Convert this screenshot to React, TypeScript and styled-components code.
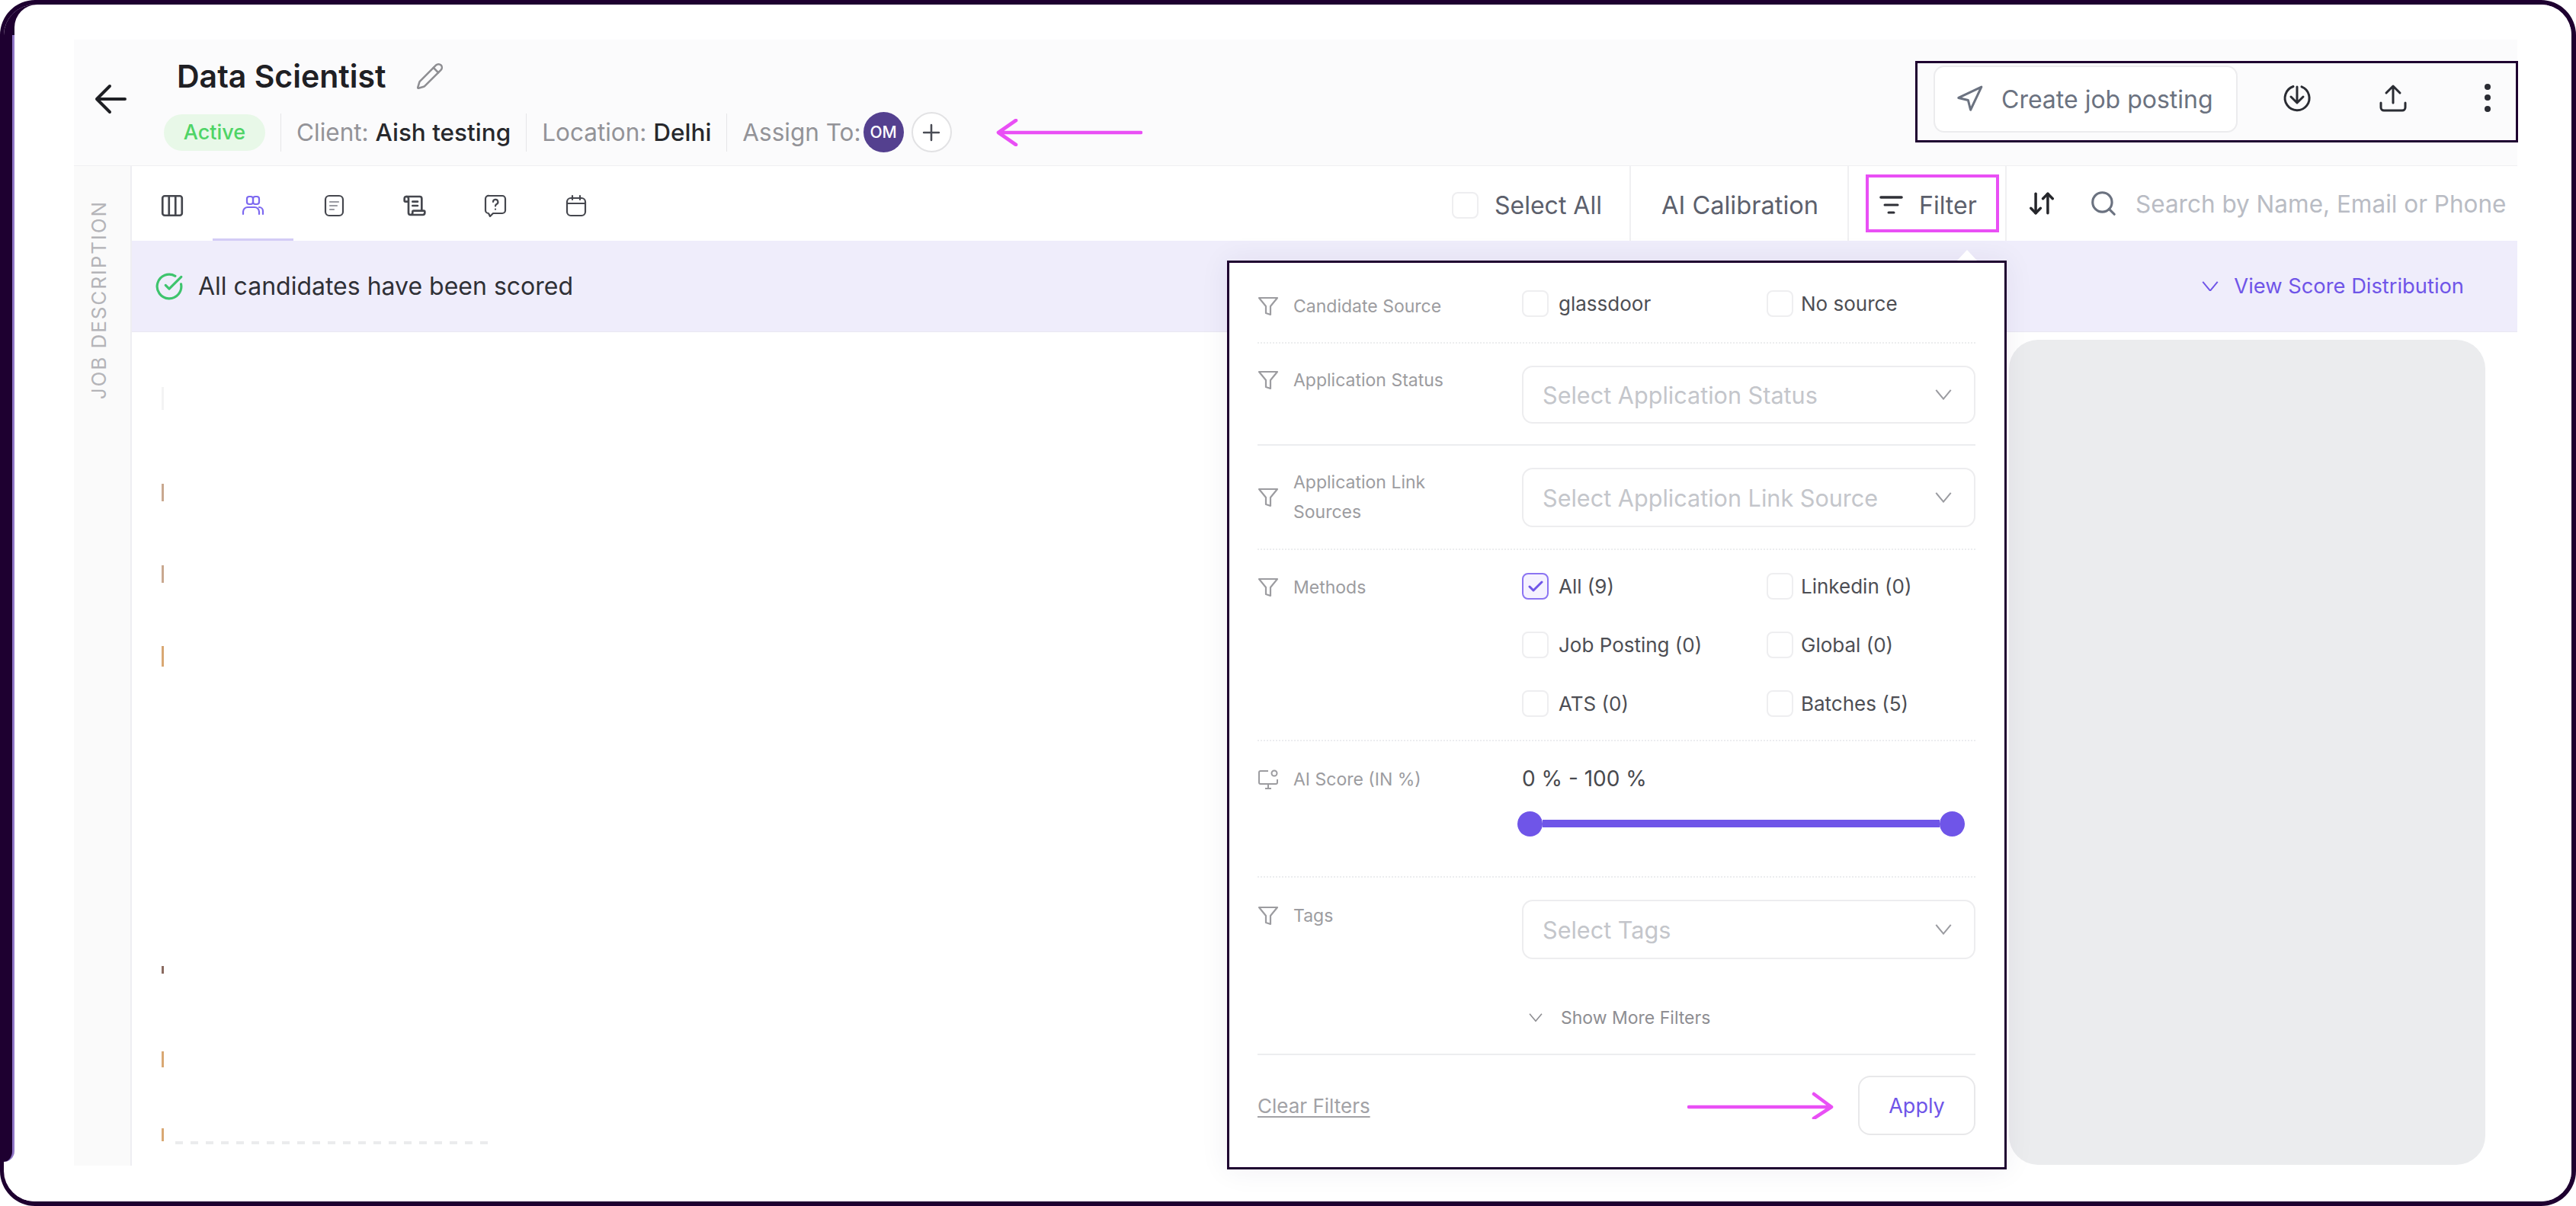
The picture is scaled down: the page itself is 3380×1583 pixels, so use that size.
import React from "react";
import styled, { createGlobalStyle } from "styled-components";
import { ArrowDownUp, Check, CircleCheckBig, Columns3, Navigation, Pencil, Plus, ScrollText, Search } from "lucide-react";

const dark = "#1e0030";
const magenta = "#e94ff5";
const purple = "#6f55e8";

const Global = createGlobalStyle`
  html, body {
    margin: 0;
    background: #fff;
    overflow: hidden;
  }
  * {
    box-sizing: border-box;
  }
  body {
    font-family: Inter, "Liberation Sans", sans-serif;
  }
`;

const Frame = styled.div`
  position: relative;
  display: flex;
  width: 3380px;
  height: 1583px;
  overflow: hidden;
  background: #fff;
  border: solid ${dark};
  border-width: 6px 6px 6px 5px;
  border-radius: 46px;

  &::before {
    content: "";
    position: absolute;
    left: 10px;
    top: 0;
    width: 40px;
    height: 40px;
    background: ${dark};
  }
`;

const Strip = styled.div`
  flex-shrink: 0;
  width: 14px;
  height: 1519px;
  background: ${dark};
  border-right: 3px solid #9077c7;
  border-bottom-right-radius: 20px;
`;

const Main = styled.div`
  position: relative;
  flex: 1;
  min-width: 0;
  padding: 46px 71px 0 78px;
  background: #fff;
  border-top-left-radius: 30px;
`;

const Panel = styled.div`
  display: flex;
  flex-direction: column;
  height: 1478px;
`;

const Header = styled.header`
  display: flex;
  justify-content: space-between;
  flex-shrink: 0;
  height: 166px;
  padding-left: 27px;
  background: #fbfbfc;
  border-bottom: 1px solid #f0f0f2;
`;

const HeaderLeft = styled.div`
  display: flex;
  align-items: flex-start;
`;

const BackIcon = styled.svg`
  width: 42px;
  height: 40px;
  margin-top: 58px;
  margin-right: 49px;
`;

const TitleColumn = styled.div`
  display: flex;
  flex-direction: column;
  padding-top: 23px;
`;

const TitleRow = styled.div`
  display: flex;
  align-items: center;
  gap: 38px;
  height: 50px;
  padding-left: 17px;
  color: #8e8e92;
`;

const Title = styled.h1`
  margin: 0;
  font-size: 41px;
  font-weight: 600;
  color: #1f2024;
  white-space: nowrap;
`;

const StatusRow = styled.div`
  display: flex;
  align-items: center;
  gap: 20px;
  height: 53px;
  margin-top: 22px;
`;

const Pill = styled.span`
  display: flex;
  align-items: center;
  justify-content: center;
  width: 133px;
  height: 48px;
  border-radius: 24px;
  background: #e8f8e8;
  color: #4fd466;
  font-size: 27px;
  font-weight: 500;
`;

const Divider = styled.span`
  width: 1px;
  height: 50px;
  background: #e6e6e8;
`;

const Meta = styled.span`
  color: #939398;
  font-size: 31.5px;
  white-space: nowrap;

  b {
    color: #27282c;
    font-weight: 500;
  }
`;

const AssignGroup = styled.div`
  display: flex;
  align-items: center;
`;

const Avatar = styled.span`
  display: flex;
  align-items: center;
  justify-content: center;
  width: 53px;
  height: 53px;
  margin-left: 3px;
  border-radius: 50%;
  background: #54408f;
  color: #fff;
  font-size: 21px;
  font-weight: 500;
`;

const AddButton = styled.span`
  display: flex;
  align-items: center;
  justify-content: center;
  width: 53px;
  height: 53px;
  margin-left: 10px;
  border-radius: 50%;
  border: 2px solid #e2e2e4;
  background: #fff;
  color: #4a4c55;
`;

const LongArrow = styled.svg<{ $left?: number; $right?: number }>`
  flex-shrink: 0;
  width: 192px;
  height: 36px;
  margin-left: ${(p) => p.$left ?? 0}px;
  margin-right: ${(p) => p.$right ?? 0}px;
`;

const ActionBox = styled.div`
  display: flex;
  align-items: flex-start;
  width: 791px;
  height: 107px;
  margin: 28px -1px 0 0;
  padding-left: 21px;
  border: 3px solid ${dark};
  background: #fbfbfc;
`;

const CreateButton = styled.button`
  display: flex;
  align-items: center;
  gap: 23px;
  width: 399px;
  height: 88px;
  margin-top: 3px;
  padding: 0 0 0 26px;
  border: 2px solid #ececee;
  border-radius: 14px;
  background: #fff;
  color: #6b7280;
  font-family: inherit;
  font-size: 32px;
  white-space: nowrap;
`;

const ActionIcon = styled.svg<{ $left: number }>`
  flex-shrink: 0;
  width: 40px;
  height: 40px;
  margin-top: 26px;
  margin-left: ${(p) => p.$left}px;
  color: #2a2c33;
`;

const Body = styled.div`
  display: flex;
  flex: 1;
  min-height: 0;
`;

const SideTab = styled.aside`
  flex-shrink: 0;
  width: 76px;
  padding: 45px 0 0 17px;
  background: #fafafa;
  border-right: 2px solid #eeeef2;
`;

const SideLabel = styled.span`
  display: block;
  writing-mode: vertical-rl;
  transform: rotate(180deg);
  color: #b4b4b8;
  font-size: 26px;
  letter-spacing: 1.9px;
  white-space: nowrap;
`;

const Workspace = styled.div`
  position: relative;
  display: flex;
  flex-direction: column;
  flex: 1;
  min-width: 0;
`;

const Toolbar = styled.div`
  display: flex;
  flex-shrink: 0;
  height: 98px;
  background: #fff;
`;

const Tab = styled.div<{ $active?: boolean }>`
  display: flex;
  align-items: center;
  justify-content: center;
  width: 106px;
  height: 101px;
  padding-top: 9px;
  color: ${(p) => (p.$active ? "#7c68f0" : "#45474e")};
  border-bottom: 6px solid ${(p) => (p.$active ? "#d3ccf6" : "transparent")};
`;

const ToolRight = styled.div`
  display: flex;
  align-items: center;
  margin-left: auto;
  padding-right: 15px;
`;

const ToolCell = styled.div<{ $w: number; $pad: number; $size?: number }>`
  display: flex;
  align-items: center;
  width: ${(p) => p.$w}px;
  height: 98px;
  padding-top: 4px;
  padding-left: ${(p) => p.$pad}px;
  border-right: 2px solid #f0f0f2;
  color: #5c606c;
  font-size: ${(p) => p.$size ?? 32}px;
  white-space: nowrap;
`;

const Box = styled.span<{ $on?: boolean; $gap?: number }>`
  display: flex;
  align-items: center;
  justify-content: center;
  flex-shrink: 0;
  width: 35px;
  height: 35px;
  margin-right: ${(p) => p.$gap ?? 13}px;
  border-radius: 8px;
  border: 2px solid ${(p) => (p.$on ? "#8b74f2" : "#eeeef0")};
  background: ${(p) => (p.$on ? "#f5f2ff" : "#fff")};
  color: ${purple};
`;

const FilterBox = styled.div`
  display: flex;
  align-items: center;
  gap: 21px;
  width: 175px;
  height: 76px;
  margin-top: -4px;
  padding: 4px 0 0 14px;
  border: 4px solid ${magenta};
`;

const SortIcon = styled(ArrowDownUp)`
  flex-shrink: 0;
  margin-left: 27px;
  color: #25262b;
`;

const SearchIcon = styled(Search)`
  flex-shrink: 0;
  margin-left: 43px;
  color: #6b7280;
`;

const SearchText = styled.span`
  width: 488px;
  margin-left: 23px;
  margin-right: -2px;
  color: #b9bcc4;
  font-size: 31.5px;
  white-space: nowrap;
`;

const Banner = styled.div`
  display: flex;
  align-items: center;
  flex-shrink: 0;
  height: 120px;
  padding: 0 70px 0 30px;
  background: #efedfb;
  border-bottom: 1px solid #e9e8f2;
  color: #2f3036;
  font-size: 32px;
`;

const BannerText = styled.span`
  margin-left: 19px;
`;

const ScoreLink = styled.span`
  display: flex;
  align-items: center;
  gap: 20px;
  margin-left: auto;
  color: ${purple};
  font-size: 27.3px;
`;

const Content = styled.div`
  display: flex;
  flex: 1;
  min-height: 0;
  justify-content: space-between;
  padding: 10px 42px 0 39px;
`;

const Leftovers = styled.div`
  display: flex;
  flex-direction: column;
  align-items: flex-start;
`;

const Remnant = styled.span<{ $top: number; $h: number; $color: string }>`
  display: block;
  width: 3px;
  height: ${(p) => p.$h}px;
  margin-top: ${(p) => p.$top}px;
  background: ${(p) => p.$color};
`;

const ClippedLine = styled.span`
  display: block;
  width: 416px;
  height: 4px;
  margin-left: 18px;
  background: repeating-linear-gradient(90deg, #c6c8cc 0 10px, transparent 10px 20px);
  opacity: 0.35;
`;

const GreyPanel = styled.div`
  width: 625px;
  height: 1083px;
  background: #ebecee;
  border-radius: 38px;
  box-shadow: 0 0 0 3px #fff;
`;

const Popup = styled.section`
  position: absolute;
  left: 1437px;
  top: 124px;
  display: flex;
  flex-direction: column;
  width: 1023px;
  height: 1193px;
  padding: 0 38px 0 37px;
  background: #fff;
  border: 3px solid ${dark};
  box-shadow: 0 0 36px rgba(40, 20, 90, 0.07);

  &::before {
    content: "";
    position: absolute;
    right: 36px;
    top: -17px;
    border-left: 13px solid transparent;
    border-right: 13px solid transparent;
    border-bottom: 14px solid #fff;
  }
`;

const FilterRow = styled.div<{ $h: number; $pad: number; $line?: "dotted" | "solid"; $center?: boolean }>`
  display: flex;
  align-items: ${(p) => (p.$center ? "center" : "flex-start")};
  flex-shrink: 0;
  height: ${(p) => p.$h}px;
  padding-top: ${(p) => p.$pad}px;
  padding-bottom: ${(p) => (p.$center ? p.$pad - 1 : 0)}px;
  border-bottom: 2px ${(p) => p.$line ?? "dotted"} #ecedef;
`;

const RowLabel = styled.div<{ $top?: number }>`
  display: flex;
  align-items: center;
  gap: 19px;
  flex-shrink: 0;
  width: 347px;
  margin-top: ${(p) => p.$top ?? 0}px;
  color: #9c9ca0;
`;

const LabelText = styled.span`
  width: 200px;
  font-size: 23px;
  line-height: 39px;
`;

const Control = styled.div`
  flex: 1;
  min-width: 0;
`;

const Options = styled.div`
  display: grid;
  grid-template-columns: 321px 1fr;
  row-gap: 42px;
`;

const Option = styled.label`
  display: flex;
  align-items: center;
  color: #4d4e54;
  font-size: 26px;
  white-space: nowrap;
`;

const SelectBox = styled.div<{ $h?: number }>`
  display: flex;
  align-items: center;
  justify-content: space-between;
  height: ${(p) => p.$h ?? 76}px;
  padding: 0 29px 0 25px;
  border: 2px solid #ededef;
  border-radius: 14px;
  color: #c4c6cb;
  font-size: 30.6px;
  white-space: nowrap;
`;

const ScoreValue = styled.div`
  color: #48494e;
  font-size: 28px;
  line-height: 36px;
`;

const SliderTrack = styled.div`
  display: flex;
  align-items: center;
  width: 587px;
  height: 34px;
  margin: 24px 0 0 -6px;
`;

const SliderThumb = styled.span`
  flex-shrink: 0;
  width: 33px;
  height: 33px;
  border-radius: 50%;
  background: ${purple};
`;

const SliderFill = styled.span`
  flex: 1;
  height: 10px;
  background: ${purple};
`;

const ShowMore = styled.div`
  display: flex;
  align-items: center;
  gap: 24px;
  margin: 63px 0 0 9px;
  color: #8e8e92;
  font-size: 23px;
`;

const Footer = styled.div`
  display: flex;
  align-items: center;
  padding-top: 27px;
`;

const ClearLink = styled.span`
  margin-right: auto;
  color: #a2a2a6;
  font-size: 26px;
  text-decoration: underline;
  text-underline-offset: 4px;
`;

const ApplyButton = styled.button`
  width: 154px;
  height: 78px;
  border: 2px solid #e8e8ea;
  border-radius: 16px;
  background: #fff;
  color: ${purple};
  font-family: inherit;
  font-size: 27px;
`;

const Funnel = () => (
  <svg width="28" height="27" viewBox="0 0 28 27" fill="none" stroke="currentColor" strokeWidth="2.2" strokeLinejoin="round">
    <path d="M2 2h24L17 13v11l-6-2v-9L2 2z" />
  </svg>
);

const Chevron = ({ size = 22, color = "#9a9ba0" }: { size?: number; color?: string }) => (
  <svg width={size} height={size * 0.62} viewBox="0 0 22 14" fill="none" stroke={color} strokeWidth="2">
    <path d="M1 1l10 12L21 1" />
  </svg>
);

const iconProps = {
  width: 30,
  height: 30,
  viewBox: "0 0 30 30",
  fill: "none",
  stroke: "currentColor",
  strokeWidth: 2.2,
  strokeLinecap: "round" as const,
  strokeLinejoin: "round" as const,
};

const tabIcons = [
  <Columns3 key="columns" size={34} strokeWidth={1.9} />,
  <svg key="people" {...iconProps}>
    <rect x="7" y="3" width="8" height="10" rx="3" />
    <rect x="15" y="3" width="8" height="10" rx="3" />
    <path d="M2 26v-3a6 6 0 0 1 6-6h9a6 6 0 0 1 6 6v3M23 17a5 5 0 0 1 5 5v4" />
  </svg>,
  <svg key="doc" {...iconProps}>
    <rect x="4" y="2" width="23" height="26" rx="5" />
    <path d="M10 10h11M10 15h9M10 20h5" stroke="#9a9ba2" />
  </svg>,
  <ScrollText key="scroll" size={32} strokeWidth={2} />,
  <svg key="question" {...iconProps}>
    <path d="M7 2h17a4 4 0 0 1 4 4v15a4 4 0 0 1-4 4H12l-4 4-2-4a4 4 0 0 1-4-4V6a4 4 0 0 1 5-4z" />
    <path d="M12 10a3.2 3.2 0 1 1 4.5 3c-1 .6-1.5 1.200-1.500 2.500M15 19.500v.2" />
  </svg>,
  <svg key="calendar" {...iconProps}>
    <rect x="3" y="5" width="24" height="23" rx="5" />
    <path d="M3 12h24M10 2v5M20 2v5" />
  </svg>,
];

const App = () => {
  return (
    <>
      <Global />
      <Frame>
        <Strip />
        <Main>
          <Panel>
            <Header>
              <HeaderLeft>
                <BackIcon viewBox="0 0 42 40" fill="none" stroke="#1e1f24" strokeWidth="4" strokeLinecap="round" strokeLinejoin="round">
                  <path d="M40 20H3M20 3L3 20l17 17" />
                </BackIcon>
                <TitleColumn>
                  <TitleRow>
                    <Title>Data Scientist</Title>
                    <Pencil size={38} strokeWidth={1.6} />
                  </TitleRow>
                  <StatusRow>
                    <Pill>Active</Pill>
                    <Divider />
                    <Meta>
                      Client: <b>Aish testing</b>
                    </Meta>
                    <Divider />
                    <Meta>
                      Location: <b>Delhi</b>
                    </Meta>
                    <Divider />
                    <AssignGroup>
                      <Meta>Assign To:</Meta>
                      <Avatar>OM</Avatar>
                      <AddButton>
                        <Plus size={34} strokeWidth={1.8} />
                      </AddButton>
                    </AssignGroup>
                    <LongArrow $left={38} viewBox="0 0 192 36" fill="none" stroke={magenta} strokeWidth="4.6" strokeLinecap="round" strokeLinejoin="round">
                      <path d="M190 18H3M26 2L3 18l23 16" />
                    </LongArrow>
                  </StatusRow>
                </TitleColumn>
              </HeaderLeft>
              <ActionBox>
                <CreateButton>
                  <Navigation size={38} strokeWidth={1.9} />
                  Create job posting
                </CreateButton>
                <ActionIcon $left={58} viewBox="0 0 40 40" fill="none" stroke="currentColor" strokeWidth="3" strokeLinecap="round" strokeLinejoin="round">
                  <path d="M15 4.500a16 16 0 1 0 11 .3M20 5v20M12 18l8 8 8-8" />
                </ActionIcon>
                <ActionIcon $left={86} viewBox="0 0 40 40" fill="none" stroke="currentColor" strokeWidth="3" strokeLinecap="round" strokeLinejoin="round">
                  <path d="M20 26V4M11 13l9-9 9 9M4 26v6a4 4 0 0 0 4 4h24a4 4 0 0 0 4-4v-6" />
                </ActionIcon>
                <ActionIcon $left={84} viewBox="0 0 40 40" fill="currentColor">
                  <circle cx="20" cy="5" r="4" />
                  <circle cx="20" cy="19" r="4" />
                  <circle cx="20" cy="34" r="4" />
                </ActionIcon>
              </ActionBox>
            </Header>
            <Body>
              <SideTab>
                <SideLabel>JOB DESCRIPTION</SideLabel>
              </SideTab>
              <Workspace>
                <Toolbar>
                  {tabIcons.map((icon, index) => (
                    <Tab key={index} $active={index === 1}>
                      {icon}
                    </Tab>
                  ))}
                  <ToolRight>
                    <ToolCell $w={235} $pad={0}>
                      <Box $gap={21} />
                      Select All
                    </ToolCell>
                    <ToolCell $w={286} $pad={40} $size={32.6}>
                      AI Calibration
                    </ToolCell>
                    <ToolCell $w={207} $pad={22}>
                      <FilterBox>
                        <svg width="31" height="26" viewBox="0 0 31 26" fill="none" stroke="#2f3037" strokeLinecap="round">
                          <path d="M2 3h27" strokeWidth="3.6" />
                          <path d="M7 13h17" strokeWidth="3" />
                          <path d="M12 23h7" strokeWidth="3" />
                        </svg>
                        Filter
                      </FilterBox>
                    </ToolCell>
                    <SortIcon size={38} strokeWidth={2.2} />
                    <SearchIcon size={38} strokeWidth={2} />
                    <SearchText>Search by Name, Email or Phone</SearchText>
                  </ToolRight>
                </Toolbar>
                <Banner>
                  <CircleCheckBig size={38} color="#3ec46d" strokeWidth={2} />
                  <BannerText>All candidates have been scored</BannerText>
                  <ScoreLink>
                    <Chevron color={purple} />
                    View Score Distribution
                  </ScoreLink>
                </Banner>
                <Content>
                  <Leftovers>
                    <Remnant $top={62} $h={30} $color="#f3f3f4" />
                    <Remnant $top={97} $h={23} $color="#c9a88f" />
                    <Remnant $top={84} $h={23} $color="#c9a88f" />
                    <Remnant $top={83} $h={27} $color="#d9a873" />
                    <Remnant $top={393} $h={10} $color="#8a6a60" />
                    <Remnant $top={102} $h={21} $color="#d9a873" />
                    <Remnant $top={80} $h={17} $color="#d9a873" />
                    <ClippedLine />
                  </Leftovers>
                  <GreyPanel />
                </Content>
                <Popup>
                  <FilterRow $h={106} $pad={36}>
                    <RowLabel $top={2}>
                      <Funnel />
                      <LabelText>Candidate Source</LabelText>
                    </RowLabel>
                    <Control>
                      <Options>
                        <Option>
                          <Box />
                          glassdoor
                        </Option>
                        <Option>
                          <Box $gap={10} />
                          No source
                        </Option>
                      </Options>
                    </Control>
                  </FilterRow>
                  <FilterRow $h={134} $pad={29} $line="solid">
                    <RowLabel>
                      <Funnel />
                      <LabelText>Application Status</LabelText>
                    </RowLabel>
                    <Control>
                      <SelectBox>
                        Select Application Status
                        <Chevron />
                      </SelectBox>
                    </Control>
                  </FilterRow>
                  <FilterRow $h={137} $pad={29} $center>
                    <RowLabel>
                      <Funnel />
                      <LabelText>Application Link Sources</LabelText>
                    </RowLabel>
                    <Control>
                      <SelectBox $h={78}>
                        Select Application Link Source
                        <Chevron />
                      </SelectBox>
                    </Control>
                  </FilterRow>
                  <FilterRow $h={251} $pad={30}>
                    <RowLabel>
                      <Funnel />
                      <LabelText>Methods</LabelText>
                    </RowLabel>
                    <Control>
                      <Options>
                        <Option>
                          <Box $on>
                            <Check size={24} strokeWidth={3} />
                          </Box>
                          All (9)
                        </Option>
                        <Option>
                          <Box $gap={10} />
                          Linkedin (0)
                        </Option>
                        <Option>
                          <Box />
                          Job Posting (0)
                        </Option>
                        <Option>
                          <Box $gap={10} />
                          Global (0)
                        </Option>
                        <Option>
                          <Box />
                          ATS (0)
                        </Option>
                        <Option>
                          <Box $gap={10} />
                          Batches (5)
                        </Option>
                      </Options>
                    </Control>
                  </FilterRow>
                  <FilterRow $h={179} $pad={31}>
                    <RowLabel>
                      <svg width="28" height="27" viewBox="0 0 28 27" fill="none" stroke="currentColor" strokeWidth="2" strokeLinejoin="round">
                        <path d="M14 2H4a2 2 0 0 0-2 2v13a2 2 0 0 0 2 2h20a2 2 0 0 0 2-2v-4M10 25h8M14 19v6" />
                        <circle cx="22" cy="5" r="3.500" />
                      </svg>
                      <LabelText>AI Score (IN %)</LabelText>
                    </RowLabel>
                    <Control>
                      <ScoreValue>0 % - 100 %</ScoreValue>
                      <SliderTrack>
                        <SliderThumb />
                        <SliderFill />
                        <SliderThumb />
                      </SliderTrack>
                    </Control>
                  </FilterRow>
                  <FilterRow $h={233} $pad={29} $line="solid">
                    <RowLabel $top={2}>
                      <Funnel />
                      <LabelText>Tags</LabelText>
                    </RowLabel>
                    <Control>
                      <SelectBox $h={78}>
                        Select Tags
                        <Chevron />
                      </SelectBox>
                      <ShowMore>
                        <Chevron size={18} color="#8e8e92" />
                        Show More Filters
                      </ShowMore>
                    </Control>
                  </FilterRow>
                  <Footer>
                    <ClearLink>Clear Filters</ClearLink>
                    <LongArrow $right={32} viewBox="0 0 192 36" fill="none" stroke={magenta} strokeWidth="4.6" strokeLinecap="round" strokeLinejoin="round">
                      <path d="M2 20h187M166 3l23 17-23 15" />
                    </LongArrow>
                    <ApplyButton>Apply</ApplyButton>
                  </Footer>
                </Popup>
              </Workspace>
            </Body>
          </Panel>
        </Main>
      </Frame>
    </>
  );
};

export default App;
